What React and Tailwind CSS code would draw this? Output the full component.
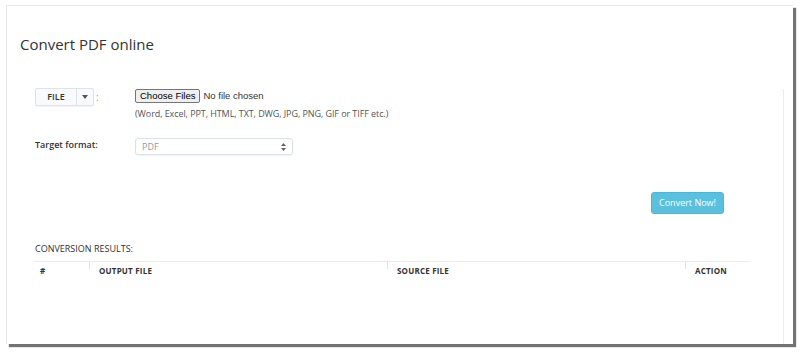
import React from 'react';

const columns = [
  { label: '#', width: 'w-[55px]', first: true },
  { label: 'OUTPUT FILE', width: 'w-[298px]' },
  { label: 'SOURCE FILE', width: 'w-[298px]' },
  { label: 'ACTION', width: 'flex-1' },
];

const App = () => {
  return (
    <div className="w-[800px] h-[352px] bg-white pt-[5px] pl-[6px] font-['Open_Sans',sans-serif] text-[#333]">
      <div className="flex w-[787px] h-[339px] bg-white border-l border-t border-[#e8e8e8] shadow-[3px_3px_1px_rgba(0,0,0,0.55)]">
        {/* Main panel */}
        <div className="flex-1 flex flex-col">
          <h1 className="mt-[28px] ml-[13px] text-[15px] leading-[20px] text-[#333]">Convert PDF online</h1>

          {/* File row */}
          <div className="flex mt-[34px] ml-[28px]">
            <div className="w-[100px] flex items-start">
              <div className="flex h-[18px] border border-[#dfe3e8] rounded-[2px] bg-[#f9fafb] shadow-[0_1px_1px_rgba(0,0,0,0.05)]">
                <span className="w-[41px] flex items-center justify-center text-[9px] font-semibold text-[#333] border-r border-[#dfe3e8]">FILE</span>
                <span className="w-[16px] flex items-center justify-center">
                  <svg width="6" height="4" viewBox="0 0 6 4"><path d="M0 0h6L3 4z" fill="#555" /></svg>
                </span>
              </div>
              <span className="ml-[2px] text-[10px] leading-[18px] text-[#999]">:</span>
            </div>
            <div className="flex flex-col">
              <div className="flex items-center h-[14px] mt-[1px] font-['Liberation_Sans',sans-serif]">
                <span className="h-[14px] px-[4px] flex items-center border border-[#767676] rounded-[2px] bg-[#efefef] text-[9.5px] text-black">Choose Files</span>
                <span className="ml-[3px] text-[9.5px] text-[#333]">No file chosen</span>
              </div>
              <p className="mt-[5px] text-[9px] leading-[12px] tracking-[-0.08px] text-[#555]">(Word, Excel, PPT, HTML, TXT, DWG, JPG, PNG, GIF or TIFF etc.)</p>
            </div>
          </div>

          {/* Target format row */}
          <div className="flex mt-[18px] ml-[28px]">
            <label className="w-[100px] text-[9px] leading-[12px] font-semibold text-[#333] pt-[1px]">Target format:</label>
            <div className="w-[158px] h-[17px] flex items-center justify-between px-[6px] border border-[#dbe2ea] rounded-[3px] bg-white shadow-[0_1px_2px_rgba(0,0,0,0.06)]">
              <span className="text-[9px] text-[#999]">PDF</span>
              <svg width="5" height="8" viewBox="0 0 5 8"><path d="M0 3L2.5 0L5 3z M0 5h5L2.5 8z" fill="#666" /></svg>
            </div>
          </div>

          {/* Convert button */}
          <div className="flex justify-end mt-[37px] mr-[59px]">
            <button className="w-[73px] h-[22px] rounded-[3px] bg-[#5bc0de] border border-[#46b8da] text-white text-[9px]">Convert Now!</button>
          </div>

          {/* Results */}
          <p className="mt-[29px] ml-[28px] text-[9px] leading-[12px] text-[#333]">CONVERSION RESULTS:</p>
          <div className="mt-[6px] ml-[27px] w-[716px] border-t border-[#ececec] flex">
            {columns.map((c) => (
              <div key={c.label} className={`${c.width} relative h-[18px] flex items-center ${c.first ? 'pl-[6px]' : 'pl-[10px]'}`}>
                {!c.first && <span className="absolute left-0 top-0 h-[7px] border-l border-[#e2e2e2]" />}
                <span className="text-[8px] font-bold text-[#333] tracking-[0.2px]">{c.label}</span>
              </div>
            ))}
          </div>
        </div>

        {/* Right strip */}
        <div className="w-[10px] mt-[83px] border-l border-[#ededed]" />
      </div>
    </div>
  );
};

export default App;
